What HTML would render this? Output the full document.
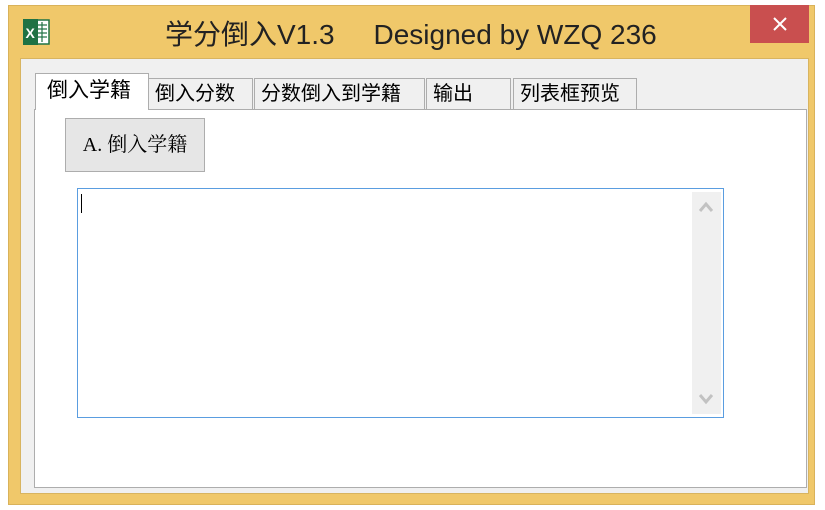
<!DOCTYPE html>
<html><head><meta charset="utf-8"><style>
body{margin:0;width:825px;height:510px;background:#fff;position:relative;overflow:hidden;font-family:"Liberation Sans","Noto Sans CJK SC",sans-serif}
div{position:absolute;box-sizing:border-box}
.win{left:8px;top:5px;width:807px;height:500px;background:#f0c86a;border:1px solid #d9b25a}
.client{left:20px;top:58px;width:789px;height:436px;background:#f0f0f0;border:1px solid #d8b460}
.panel{left:34px;top:109px;width:773px;height:379px;background:#fff;border:1px solid #adadad}
.tab{top:78px;height:31px;background:#f0f0f0;border:1px solid #adadad;border-bottom:none;font-size:20px;color:#000;padding-left:6px;line-height:30px}
.tab.act{top:73px;height:37px;background:#fff;left:35px;width:114px;padding-left:11px;font-size:21px;line-height:34px}
</style></head><body>
<div class="win"></div>
<svg style="position:absolute;left:22px;top:17px" width="30" height="30" viewBox="0 0 30 30">
<rect x="10" y="3" width="17" height="24" fill="#fff" stroke="#1f7244" stroke-width="1.5"/>
<g stroke="#1f7244" stroke-width="1.2"><line x1="15" y1="8" x2="25" y2="8"/><line x1="15" y1="12" x2="25" y2="12"/><line x1="15" y1="16" x2="25" y2="16"/><line x1="15" y1="20" x2="25" y2="20"/><line x1="20" y1="5" x2="20" y2="25"/></g>
<rect x="1" y="2" width="15" height="26" fill="#1f7244"/>
<text x="3.5" y="21" font-size="14" font-weight="bold" fill="#fff" font-family="Liberation Sans">X</text>
</svg>
<div style="left:165px;top:13px;font-size:28px;color:#222;white-space:pre">学分倒入V1.3     Designed by WZQ 236</div>
<div style="left:750px;top:5px;width:59px;height:38px;background:#c94f4f"></div>
<svg style="position:absolute;left:772px;top:16px" width="16" height="16"><path d="M2 2L14 14M14 2L2 14" stroke="#fff" stroke-width="2"/></svg>
<div class="client"></div>
<div class="panel"></div>
<div class="tab act">倒入学籍</div>
<div class="tab" style="left:148px;width:105px">倒入分数</div>
<div class="tab" style="left:254px;width:171px">分数倒入到学籍</div>
<div class="tab" style="left:426px;width:85px">输出</div>
<div class="tab" style="left:513px;width:124px">列表框预览</div>
<div style="left:65px;top:118px;width:140px;height:54px;background:#e6e6e6;border:1px solid #adadad;font-size:20px;line-height:52px;text-align:center;font-family:'Liberation Serif','Noto Serif CJK SC',serif">A. 倒入学籍</div>
<div style="left:77px;top:188px;width:647px;height:230px;background:#fff;border:1px solid #5a9de0"></div>
<div style="left:81px;top:194px;width:1px;height:19px;background:#000"></div>
<div style="left:692px;top:192px;width:29px;height:222px;background:#f0f0f0"></div>
<svg style="position:absolute;left:697px;top:200px" width="18" height="14"><polyline points="3,11 9,4 15,11" fill="none" stroke="#c2c2c2" stroke-width="3"/></svg>
<svg style="position:absolute;left:697px;top:392px" width="18" height="14"><polyline points="3,3 9,10 15,3" fill="none" stroke="#c2c2c2" stroke-width="3"/></svg>
</body></html>
